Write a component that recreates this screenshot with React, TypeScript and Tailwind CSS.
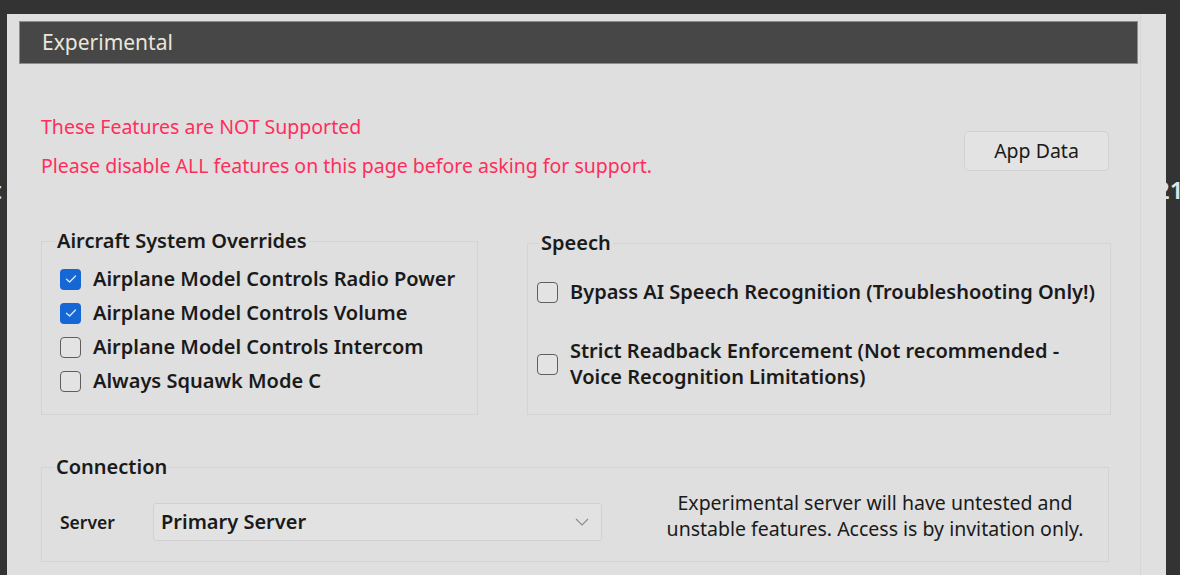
import React from "react"

const font = { fontFamily: '"Noto Sans", "Open Sans", Arial, sans-serif' }

function Check({ checked }: { checked?: boolean }) {
  if (checked) {
    return (
      <span className="flex h-[21px] w-[21px] shrink-0 items-center justify-center rounded-[4px] bg-[#1467d4]">
        <svg width="12" height="10" viewBox="0 0 12 10" fill="none">
          <path d="M1.5 5.2 L4.6 8 L10.5 2" stroke="#dfe9f7" strokeWidth="1.3" strokeLinecap="round" strokeLinejoin="round" />
        </svg>
      </span>
    )
  }
  return <span className="block h-[21px] w-[21px] shrink-0 rounded-[4px] border border-[#5f5f5f] bg-[#e3e3e3]" />
}

function Option({ checked, children }: { checked?: boolean; children: React.ReactNode }) {
  return (
    <div className="flex items-center gap-[12px]">
      <Check checked={checked} />
      <span className="text-[20px] font-semibold leading-[24px] text-[#1a1a1a]">{children}</span>
    </div>
  )
}

export default function App() {
  return (
    <div className="relative h-[575px] w-[1180px] overflow-hidden bg-[#333333]" style={font}>
      {/* text behind the panel */}
      <span className="absolute left-[-8px] top-[172px] text-[24px] font-semibold text-[#d8e6ee]">t</span>
      <span className="absolute left-[1156px] top-[172px] text-[24px] font-semibold text-[#d8e6ee]">21</span>

      <div className="relative ml-[7px] mt-[14px] flex h-[575px] w-[1159px] bg-[#dfdfdf]">
        <div className="w-[1133px] pl-[12px] pt-[7px]">
          {/* Header */}
          <div className="flex h-[43px] w-[1119px] items-center border border-[#8c8c8c] bg-[#474747] pl-[22px]">
            <span className="text-[21px] text-[#ebe6dc]">Experimental</span>
          </div>

          {/* Warning */}
          <div className="mt-[53px] flex w-[1090px] items-start justify-between pl-[22px]">
            <div className="text-[19.5px] leading-[20px] text-[#ff2d5c]">
              <p>These Features are NOT Supported</p>
              <p className="mt-[19px]">Please disable ALL features on this page before asking for support.</p>
            </div>
            <button className="mt-[14px] h-[40px] w-[145px] rounded-[5px] border border-[#d2d2d2] bg-[#e3e3e3] text-[19.5px] text-[#1a1a1a]">
              App Data
            </button>
          </div>

          {/* Groups */}
          <div className="mt-[54px] flex gap-[49px] pl-[22px]">
            <fieldset className="h-[185px] w-[437px] border border-[#d4d4d4] px-[18px] pt-[15px]">
              <legend className="-ml-[5px] px-[2px] text-[20px] font-semibold leading-[22px] text-[#1a1a1a]">Aircraft System Overrides</legend>
              <div className="flex flex-col gap-[10px]">
                <Option checked>Airplane Model Controls Radio Power</Option>
                <Option checked>Airplane Model Controls Volume</Option>
                <Option>Airplane Model Controls Intercom</Option>
                <Option>Always Squawk Mode C</Option>
              </div>
            </fieldset>

            <fieldset className="mt-[2px] h-[183px] w-[584px] border border-[#d4d4d4] px-[9px] pt-[26px]">
              <legend className="ml-[2px] px-[2px] text-[20px] font-semibold leading-[22px] text-[#1a1a1a]">Speech</legend>
              <div className="flex flex-col gap-[34px]">
                <Option>Bypass AI Speech Recognition (Troubleshooting Only!)</Option>
                <div className="flex items-center gap-[12px]">
                  <Check />
                  <span className="text-[20px] font-semibold leading-[26px] text-[#1a1a1a]">
                    Strict Readback Enforcement (Not recommended -<br />Voice Recognition Limitations)
                  </span>
                </div>
              </div>
            </fieldset>
          </div>

          {/* Connection */}
          <fieldset className="ml-[22px] mt-[41px] h-[106px] w-[1068px] border border-[#d4d4d4] px-[18px] pt-[12px]">
            <legend className="-ml-[6px] px-[2px] text-[20px] font-semibold leading-[22px] text-[#1a1a1a]">Connection</legend>
            <div className="flex items-start">
              <span className="mt-[13px] flex h-[38px] w-[93px] items-center text-[17.5px] font-semibold text-[#1a1a1a]">Server</span>
              <div className="mt-[13px] flex h-[38px] w-[449px] items-center justify-between rounded-[3px] border border-[#d0d0d0] bg-[#e2e2e2] pl-[7px] pr-[12px]">
                <span className="text-[20px] font-semibold text-[#1a1a1a]">Primary Server</span>
                <svg width="14" height="8" viewBox="0 0 14 8" fill="none">
                  <path d="M1 1 L7 7 L13 1" stroke="#8a8a8a" strokeWidth="1.1" />
                </svg>
              </div>
              <p className="ml-[58px] w-[430px] whitespace-nowrap text-center text-[19.5px] leading-[26px] text-[#1a1a1a]">
                Experimental server will have untested and
                <br />
                unstable features. Access is by invitation only.
              </p>
            </div>
          </fieldset>
        </div>
        <div className="w-[26px] border-l border-[#d6d6d6] bg-[#e0e0e0]" />
      </div>
    </div>
  )
}
